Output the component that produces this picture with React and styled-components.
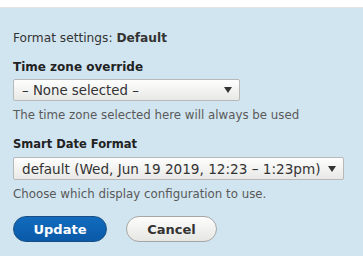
import React from "react";
import styled, { createGlobalStyle } from "styled-components";

const GlobalStyle = createGlobalStyle`
  html, body {
    margin: 0;
    padding: 0;
    background: #ffffff;
  }
  body {
    font-family: "DejaVu Sans", Verdana, sans-serif;
    color: #333;
  }
`;

const Page = styled.div`
  padding-top: 7px;
`;

const Panel = styled.div`
  background: #d1e5f0;
  border-top: 1px solid #e4e4e0;
  padding: 23px 13px 14px;
  min-height: 210px;
`;

const Heading = styled.div`
  font-size: 12.2px;
  color: #333;
  margin-bottom: 15px;
  strong {
    font-weight: bold;
  }
`;

const Field = styled.div`
  margin-bottom: 15px;
`;

const Label = styled.div`
  font-size: ${(p) => (p.$small ? "11.5px" : "12px")};
  font-weight: bold;
  color: #222;
  margin-bottom: ${(p) => (p.$small ? "6px" : "5px")};
`;

const Select = styled.div`
  display: inline-flex;
  align-items: center;
  box-sizing: border-box;
  width: ${(p) => p.$width}px;
  height: ${(p) => p.$height}px;
  padding: 0 7px 0 8px;
  border: 1px solid #b8b8b8;
  border-radius: 2px;
  background: linear-gradient(#fefefe, #e8e8e6);
  font-size: ${(p) => p.$size || 13.3}px;
  color: #333;
  white-space: nowrap;
`;

const Arrow = styled.span`
  width: 0;
  height: 0;
  border-left: 4px solid transparent;
  border-right: 4px solid transparent;
  border-top: 6px solid #333;
  margin-left: auto;
  flex-shrink: 0;
`;

const Help = styled.div`
  font-size: 11.8px;
  color: #595959;
  margin-top: 7px;
`;

const Actions = styled.div`
  display: flex;
  gap: 19px;
`;

const Button = styled.button`
  box-sizing: border-box;
  width: ${(p) => p.$width}px;
  height: 26px;
  border-radius: 20px;
  font-family: "DejaVu Sans", Verdana, sans-serif;
  font-size: 13px;
  font-weight: bold;
  padding: 0;
  cursor: pointer;
  border: 1px solid ${(p) => (p.$primary ? "#1a4f85" : "#a6a6a6")};
  color: ${(p) => (p.$primary ? "#fff" : "#333")};
  background: ${(p) =>
    p.$primary
      ? "linear-gradient(#126bbd, #0a5aa8)"
      : "linear-gradient(#fdfdfc, #e6e6e3)"};
`;

export default function App() {
  return (
    <Page>
      <GlobalStyle />
      <Panel>
        <Heading>
          Format settings: <strong>Default</strong>
        </Heading>
        <Field>
          <Label>Time zone override</Label>
          <Select $width={227} $height={22}>
            <span>– None selected –</span>
            <Arrow />
          </Select>
          <Help>The time zone selected here will always be used</Help>
        </Field>
        <Field>
          <Label $small>Smart Date Format</Label>
          <Select $width={331} $height={23} $size={13.6}>
            <span>default (Wed, Jun 19 2019, 12:23 – 1:23pm)</span>
            <Arrow />
          </Select>
          <Help>Choose which display configuration to use.</Help>
        </Field>
        <Actions>
          <Button $primary $width={94}>Update</Button>
          <Button $width={91}>Cancel</Button>
        </Actions>
      </Panel>
    </Page>
  );
}
